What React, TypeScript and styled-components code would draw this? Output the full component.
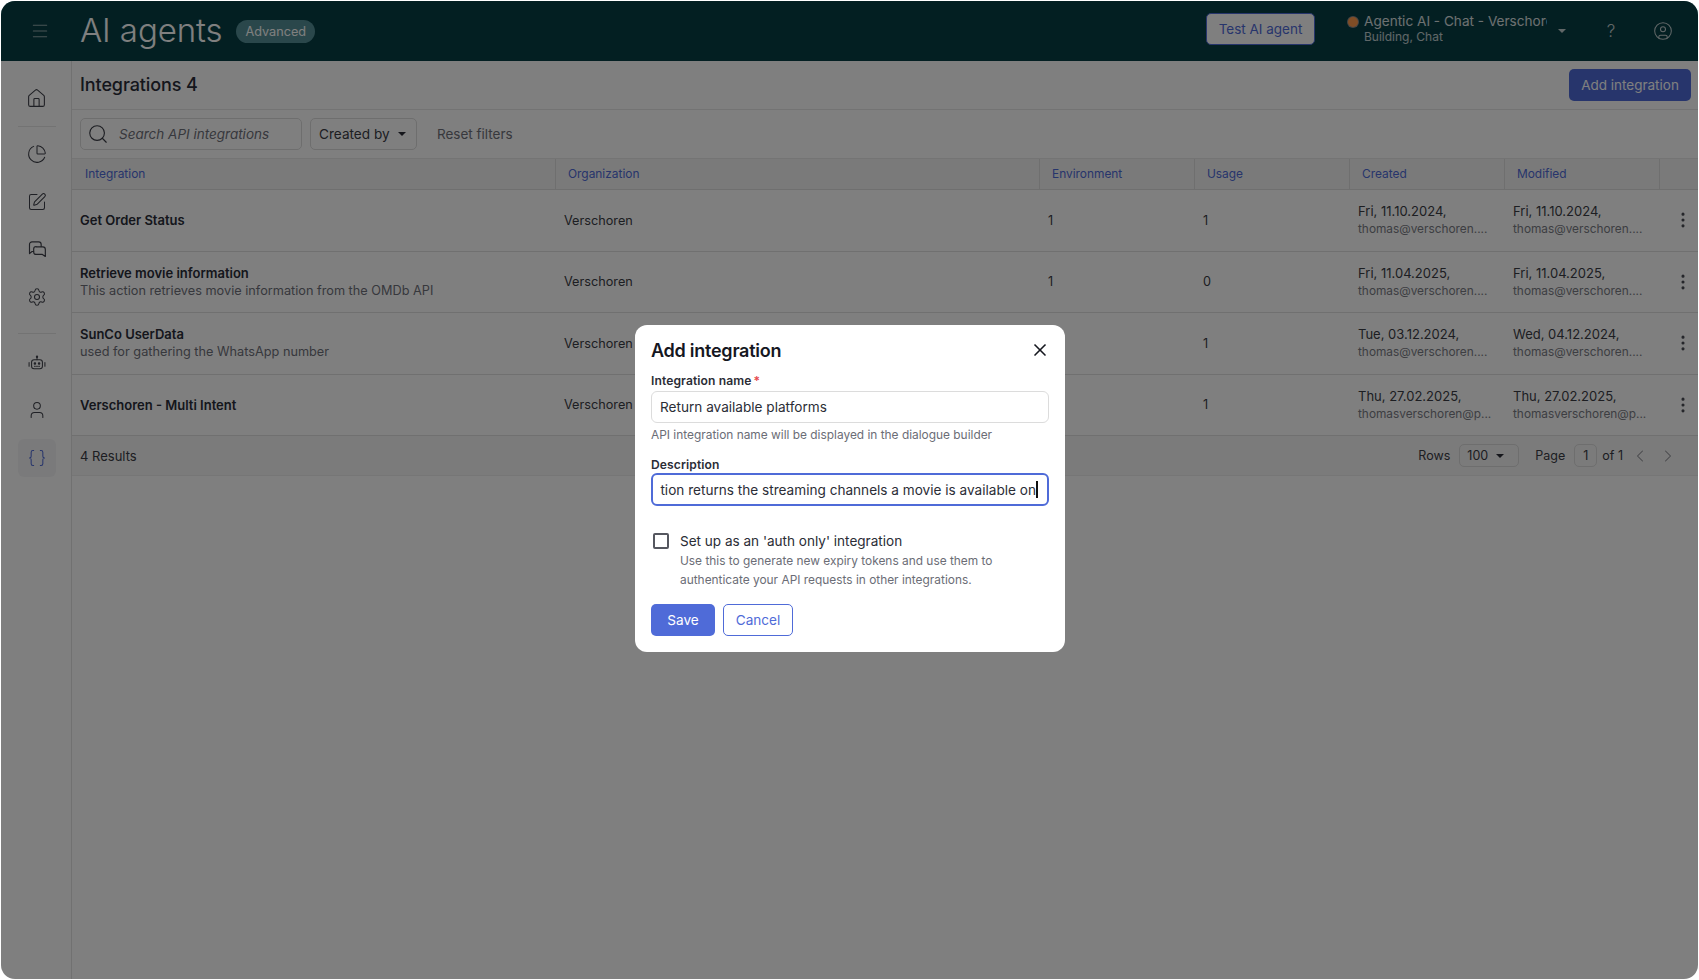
import React from 'react';
import styled, { createGlobalStyle } from 'styled-components';
import {
  Braces, ChartPie, ChevronLeft, ChevronRight, CircleUser, EllipsisVertical, House, Menu,
  Search, Settings, SquarePen, User, X,
} from 'lucide-react';

const Global = createGlobalStyle`
  html, body { margin: 0; padding: 0; background: #fff; }
  body { font-family: Inter, "Liberation Sans", sans-serif; color: #1d1f27; font-size: 14px; }
  * { box-sizing: border-box; }
`;

const Frame = styled.div`
  position: relative;
  width: 1699px;
  height: 980px;
  padding: 1px 0 0 1px;
  overflow: hidden;
`;
const Screen = styled.div`
  width: 1697px;
  height: 978px;
  background: #fff;
  border-radius: 14px;
  overflow: hidden;
  display: flex;
  flex-direction: column;
`;
const TopBar = styled.header`
  height: 60px;
  flex: none;
  background: #063e45;
  display: flex;
  align-items: center;
  color: #fff;
`;
const MenuSlot = styled.div`
  width: 79px;
  padding-left: 29px;
  display: flex;
  color: #93a9ab;
`;
const Title = styled.h1`
  margin: 0 0 3px;
  font-size: 33px;
  font-weight: 300;
  letter-spacing: -0.1px;
  color: #fff;
`;
const Badge = styled.span`
  margin-left: 14px;
  height: 23px;
  padding: 0 9px;
  border-radius: 12px;
  background: #558f96;
  color: #fff;
  font-size: 12.7px;
  display: flex;
  align-items: center;
`;
const TopRight = styled.div`
  margin-left: auto;
  display: flex;
  align-items: center;
`;
const TestButton = styled.button`
  width: 109px;
  height: 32px;
  margin-bottom: 4px;
  border-radius: 5px;
  background: #fff;
  border: 1px solid #4f6bd8;
  color: #4f6bd8;
  font: 400 13.5px Inter, sans-serif;
`;
const Dot = styled.span`
  width: 10px;
  height: 10px;
  border-radius: 50%;
  background: #ff9a4d;
  box-shadow: 0 0 0 1px #8a8a8a;
  margin: 0 6px 18px 33px;
`;
const Project = styled.div`
  width: 183px;
  margin-bottom: 6px;
  overflow: hidden;
  white-space: nowrap;
  color: #fff;
`;
const ProjectName = styled.div`
  font-size: 13.6px;
  line-height: 16px;
  opacity: .85;
`;
const ProjectSub = styled.div`
  font-size: 12px;
  line-height: 15px;
  opacity: .75;
`;
const TopIcons = styled.div`
  display: flex;
  align-items: center;
  color: #c3cfd0;
  padding-right: 25px;
  margin-left: 11px;
`;
const Help = styled.span`
  width: 16px;
  margin-left: 37px;
  text-align: center;
  font-size: 17px;
  font-weight: 300;
`;
const UserSlot = styled.span`
  display: flex;
  margin-left: 34px;
`;
const Body = styled.div`
  flex: 1;
  display: flex;
  min-height: 0;
`;
const Sidebar = styled.nav`
  width: 71px;
  flex: none;
  border-right: 1px solid #e2e2e2;
  padding-left: 1px;
  display: flex;
  flex-direction: column;
  align-items: center;
`;
const NavItem = styled.div<{ $active?: boolean }>`
  width: 38px;
  height: 38px;
  margin-bottom: ${p => (p.$active ? 0 : 9.6)}px;
  display: flex;
  align-items: center;
  justify-content: center;
  border-radius: 6px;
  color: ${p => (p.$active ? '#4f6bd8' : '#3f414a')};
  background: ${p => (p.$active ? '#f5f5f6' : 'transparent')};
`;
const NavDivider = styled.div<{ $before: number; $after: number }>`
  width: 38px;
  height: 1px;
  background: #e6e6e6;
  margin: ${p => p.$before}px 0 ${p => p.$after}px;
`;
const NavTop = styled.div`
  height: 18px;
  flex: none;
`;
const Main = styled.main`
  flex: 1;
  min-width: 0;
`;
const PageHead = styled.div`
  height: 49px;
  border-bottom: 1px solid #e6e6e6;
  display: flex;
  align-items: center;
  justify-content: space-between;
  padding: 0 7px 0 8px;
`;
const PageTitle = styled.h2`
  margin: 0 0 1px;
  font-size: 18px;
  font-weight: 500;
  letter-spacing: -0.1px;
  color: #2a2d38;
`;
const AddButton = styled.button`
  width: 122px;
  height: 32px;
  margin-top: -1px;
  border: none;
  border-radius: 5px;
  background: #4f6bd8;
  color: #fff;
  font: 400 13.5px Inter, sans-serif;
`;
const Filters = styled.div`
  height: 48px;
  display: flex;
  align-items: center;
  padding: 0 8px;
  gap: 8px;
`;
const SearchBox = styled.div`
  width: 222px;
  height: 32px;
  border: 1px solid #dcdcdc;
  border-radius: 5px;
  display: flex;
  align-items: center;
  padding-left: 6px;
  gap: 10px;
  color: #3a3c45;
`;
const SearchText = styled.span`
  font-size: 13.5px;
  font-style: italic;
  color: #6f717a;
`;
const Select = styled.div<{ $w: number; $h: number; $size: number; $left: number; $right: number }>`
  width: ${p => p.$w}px;
  height: ${p => p.$h}px;
  border: 1px solid #dcdcdc;
  border-radius: 5px;
  display: flex;
  align-items: center;
  justify-content: space-between;
  padding: 0 ${p => p.$right}px 0 ${p => p.$left}px;
  font-size: ${p => p.$size}px;
  color: #3a3c45;
`;
const Caret = styled.span<{ $color?: string }>`
  width: 0;
  height: 0;
  border-left: 4px solid transparent;
  border-right: 4px solid transparent;
  border-top: 4.5px solid ${p => p.$color ?? '#2b2d36'};
`;
const TextLink = styled.span`
  margin-left: 12px;
  font-size: 13.5px;
  color: #6f717a;
`;
const Grid = styled.div`
  display: grid;
  grid-template-columns: 483px 484px repeat(4, 155px) 1fr;
`;
const HeadRow = styled(Grid)`
  height: 32px;
  background: #f4f4f4;
  border-top: 1px solid #e8e8e8;
  border-bottom: 1px solid #dedede;
`;
const HeadCell = styled.div`
  display: flex;
  align-items: center;
  padding: 0 0 2px 12px;
  font-size: 11.9px;
  color: #4f6bd8;
  border-left: 1px solid #dedede;
  &:first-child { border-left: none; padding-left: 13px; }
`;
const Row = styled(Grid)`
  height: 61.5px;
  border-bottom: 1px solid #e0e0e0;
  &:last-of-type { border-bottom-color: #d8d8d8; }
`;
const Cell = styled.div`
  display: flex;
  flex-direction: column;
  justify-content: center;
  padding-left: 9px;
  min-width: 0;
  color: #3a3c45;
  font-size: 12.7px;
  &:first-child { padding-left: 8px; }
`;
const RowName = styled.div`
  font-weight: 600;
  font-size: 13px;
  line-height: 18px;
  color: #2a2d38;
`;
const RowDesc = styled.div`
  font-size: 12.72px;
  line-height: 18px;
  color: #6f717a;
`;
const DateText = styled.div`
  font-size: 13px;
  line-height: 18px;
  color: #3a3c45;
`;
const Owner = styled.div`
  font-size: 11.85px;
  line-height: 18px;
  color: #7a7c85;
  white-space: nowrap;
`;
const DotsCell = styled.div`
  display: flex;
  align-items: center;
  padding-left: 14px;
  color: #4a4c55;
`;
const TableFoot = styled.div`
  height: 40px;
  background: #f6f6f6;
  border-bottom: 1px solid #ececec;
  display: flex;
  align-items: center;
  padding: 0 0 0 8px;
  font-size: 13px;
  color: #3a3c45;
`;
const Pager = styled.div`
  margin-left: auto;
  display: flex;
  align-items: center;
  padding-right: 20px;
  font-size: 12.5px;
`;
const PageBox = styled.span`
  width: 23px;
  height: 23px;
  border: 1px solid #dcdcdc;
  border-radius: 5px;
  margin: 0 5px 0 9px;
  display: flex;
  align-items: center;
  justify-content: center;
  font-size: 12.5px;
`;
const PagerLabel = styled.span<{ $gap?: number }>`
  margin-left: ${p => p.$gap ?? 0}px;
`;
const PagerIcon = styled.span<{ $gap: number }>`
  display: flex;
  margin-left: ${p => p.$gap}px;
  color: #8d8f96;
`;
const Overlay = styled.div`
  position: absolute;
  inset: 1px 0 0 1px;
  width: 1697px;
  height: 978px;
  border-radius: 14px;
  background: rgba(0, 0, 0, .5);
`;
const Modal = styled.div`
  position: absolute;
  left: 635px;
  top: 325px;
  width: 430px;
  height: 327px;
  background: #fff;
  border-radius: 12px;
  padding: 13px 16px 0;
  display: flex;
  flex-direction: column;
`;
const ModalHead = styled.div`
  display: flex;
  align-items: center;
  justify-content: space-between;
  height: 24px;
  color: #15171f;
`;
const CloseSlot = styled.span`
  display: flex;
  margin-right: -1px;
`;
const ModalTitle = styled.h3`
  margin: 0;
  font-size: 18px;
  font-weight: 600;
  letter-spacing: -0.25px;
`;
const Label = styled.div<{ $top: number }>`
  margin-top: ${p => p.$top}px;
  height: 16px;
  line-height: 16px;
  font-size: 12.1px;
  font-weight: 600;
  letter-spacing: .1px;
  color: #2b2d36;
`;
const Required = styled.span`
  color: #e5484d;
  margin-left: 2px;
`;
const Field = styled.div<{ $focus?: boolean }>`
  margin-top: ${p => (p.$focus ? 0 : 2)}px;
  width: 398px;
  height: ${p => (p.$focus ? 33 : 32)}px;
  border: ${p => (p.$focus ? '2px solid #4f6bd8' : '1px solid #dcdcdc')};
  border-radius: 6px;
  display: flex;
  align-items: center;
  padding: 0 9px 0 ${p => (p.$focus ? 7 : 8)}px;
  white-space: nowrap;
  font-size: 13.6px;
  color: #2b2d36;
`;
const ScrolledText = styled.div`
  flex: 1;
  min-width: 0;
  overflow: hidden;
  display: flex;
  justify-content: flex-end;
`;
const CaretBar = styled.span`
  flex: none;
  width: 2px;
  height: 17px;
  background: #111;
`;
const Hint = styled.div`
  margin-top: 4px;
  height: 16px;
  line-height: 16px;
  font-size: 11.9px;
  color: #6b6d76;
`;
const CheckRow = styled.div`
  display: flex;
  margin-top: 26px;
`;
const CheckBox = styled.span`
  flex: none;
  width: 16px;
  height: 16px;
  margin: 1px 11px 0 2px;
  border: 2px solid #55575f;
  border-radius: 2px;
  background: #fff;
`;
const CheckLabel = styled.div`
  font-size: 13.55px;
  line-height: 18px;
  color: #2b2d36;
`;
const CheckHelp = styled.div`
  margin-top: 1px;
  font-size: 11.9px;
  line-height: 19px;
  color: #6b6d76;
`;
const Actions = styled.div`
  margin-top: 15px;
  display: flex;
  gap: 8px;
`;
const Primary = styled.button`
  width: 64px;
  height: 32px;
  border: none;
  border-radius: 5px;
  background: #4f6bd8;
  color: #fff;
  font: 400 13.6px Inter, sans-serif;
`;
const Secondary = styled.button`
  width: 70px;
  height: 32px;
  border: 1px solid #4f6bd8;
  border-radius: 5px;
  background: #fff;
  color: #4f6bd8;
  font: 400 13.6px Inter, sans-serif;
`;

const ChatIcon = () => (
  <svg width="20" height="20" viewBox="0 0 24 24" fill="none" stroke="currentColor" strokeWidth="1.4" strokeLinecap="round" strokeLinejoin="round">
    <path d="M8 15H6l-3 2.5V6.5A3 3 0 0 1 6 3.5h8a3 3 0 0 1 3 3V9" />
    <path d="M11 9.5h8a3 3 0 0 1 3 3v8.5l-3.5-2.5H11a3 3 0 0 1-3-3v-3.5a3 3 0 0 1 3-3z" />
  </svg>
);
const RobotIcon = () => (
  <svg width="20" height="20" viewBox="0 0 24 24" fill="none" stroke="currentColor" strokeWidth="1.25" strokeLinecap="round" strokeLinejoin="round">
    <circle cx="12" cy="4.5" r=".8" />
    <path d="M12 5.5V8" />
    <rect x="5.5" y="8" width="13" height="11" rx="3" />
    <path d="M2.5 11.5v4.5M21.5 11.5v4.5" />
    <circle cx="9.5" cy="12.5" r=".9" fill="currentColor" />
    <circle cx="14.5" cy="12.5" r=".9" fill="currentColor" />
    <path d="M9 16h6" strokeDasharray="1 1.5" />
  </svg>
);

const rows = [
  { name: 'Get Order Status', org: 'Verschoren', env: '1', usage: '1', created: 'Fri, 11.10.2024,', modified: 'Fri, 11.10.2024,', owner: 'thomas@verschoren....' },
  { name: 'Retrieve movie information', desc: 'This action retrieves movie information from the OMDb API', org: 'Verschoren', env: '1', usage: '0', created: 'Fri, 11.04.2025,', modified: 'Fri, 11.04.2025,', owner: 'thomas@verschoren....' },
  { name: 'SunCo UserData', desc: 'used for gathering the WhatsApp number', org: 'Verschoren', env: '1', usage: '1', created: 'Tue, 03.12.2024,', modified: 'Wed, 04.12.2024,', owner: 'thomas@verschoren....' },
  { name: 'Verschoren - Multi Intent', org: 'Verschoren', env: '1', usage: '1', created: 'Thu, 27.02.2025,', modified: 'Thu, 27.02.2025,', owner: 'thomasverschoren@p...' },
];
const columns = ['Integration', 'Organization', 'Environment', 'Usage', 'Created', 'Modified', ''];

export default function App() {
  return (
    <Frame>
      <Global />
      <Screen>
        <TopBar>
          <MenuSlot><Menu size={20} strokeWidth={1.25} /></MenuSlot>
          <Title>AI agents</Title>
          <Badge>Advanced</Badge>
          <TopRight>
            <TestButton>Test AI agent</TestButton>
            <Dot />
            <Project>
              <ProjectName>Agentic AI - Chat - Verschoren</ProjectName>
              <ProjectSub>Building, Chat</ProjectSub>
            </Project>
            <TopIcons>
              <Caret $color="#c3cfd0" />
              <Help>?</Help>
              <UserSlot><CircleUser size={20} strokeWidth={1.25} /></UserSlot>
            </TopIcons>
          </TopRight>
        </TopBar>
        <Body>
          <Sidebar>
            <NavTop />
            <NavItem><House size={21} strokeWidth={1.25} /></NavItem>
            <NavDivider $before={-0.6} $after={8} />
            <NavItem><ChartPie size={20} strokeWidth={1.25} /></NavItem>
            <NavItem><SquarePen size={20} strokeWidth={1.25} /></NavItem>
            <NavItem><ChatIcon /></NavItem>
            <NavItem><Settings size={20} strokeWidth={1.25} /></NavItem>
            <NavDivider $before={7.4} $after={10} />
            <NavItem><RobotIcon /></NavItem>
            <NavItem><User size={20} strokeWidth={1.25} /></NavItem>
            <NavItem $active><Braces size={20} strokeWidth={1.25} /></NavItem>
          </Sidebar>
          <Main>
            <PageHead>
              <PageTitle>Integrations 4</PageTitle>
              <AddButton>Add integration</AddButton>
            </PageHead>
            <Filters>
              <SearchBox><Search size={22} strokeWidth={1.25} /><SearchText>Search API integrations</SearchText></SearchBox>
              <Select $w={107} $h={32} $size={13.6} $left={8} $right={10}>Created by <Caret /></Select>
              <TextLink>Reset filters</TextLink>
            </Filters>
            <HeadRow>
              {columns.map(c => <HeadCell key={c}>{c}</HeadCell>)}
            </HeadRow>
            {rows.map(r => (
              <Row key={r.name}>
                <Cell>
                  <RowName>{r.name}</RowName>
                  {r.desc && <RowDesc>{r.desc}</RowDesc>}
                </Cell>
                <Cell>{r.org}</Cell>
                <Cell>{r.env}</Cell>
                <Cell>{r.usage}</Cell>
                <Cell><DateText>{r.created}</DateText><Owner>{r.owner}</Owner></Cell>
                <Cell><DateText>{r.modified}</DateText><Owner>{r.owner}</Owner></Cell>
                <DotsCell><EllipsisVertical size={20} strokeWidth={1.75} /></DotsCell>
              </Row>
            ))}
            <TableFoot>
              4 Results
              <Pager>
                Rows
                <PagerLabel $gap={9} />
                <Select $w={60} $h={23} $size={12.5} $left={7} $right={14}>100 <Caret /></Select>
                <PagerLabel $gap={16}>Page</PagerLabel>
                <PageBox>1</PageBox>
                of 1
                <PagerIcon $gap={7}><ChevronLeft size={20} strokeWidth={1.25} /></PagerIcon>
                <PagerIcon $gap={8}><ChevronRight size={20} strokeWidth={1.25} /></PagerIcon>
              </Pager>
            </TableFoot>
          </Main>
        </Body>
      </Screen>
      <Overlay />
      <Modal>
        <ModalHead>
          <ModalTitle>Add integration</ModalTitle>
          <CloseSlot><X size={20} strokeWidth={2} /></CloseSlot>
        </ModalHead>
        <Label $top={11}>Integration name<Required>*</Required></Label>
        <Field>Return available platforms</Field>
        <Hint>API integration name will be displayed in the dialogue builder</Hint>
        <Label $top={14}>Description</Label>
        <Field $focus><ScrolledText>This action returns the streaming channels a movie is available on</ScrolledText><CaretBar /></Field>
        <CheckRow>
          <CheckBox />
          <div>
            <CheckLabel>Set up as an 'auth only' integration</CheckLabel>
            <CheckHelp>Use this to generate new expiry tokens and use them to<br />authenticate your API requests in other integrations.</CheckHelp>
          </div>
        </CheckRow>
        <Actions>
          <Primary>Save</Primary>
          <Secondary>Cancel</Secondary>
        </Actions>
      </Modal>
    </Frame>
  );
}
